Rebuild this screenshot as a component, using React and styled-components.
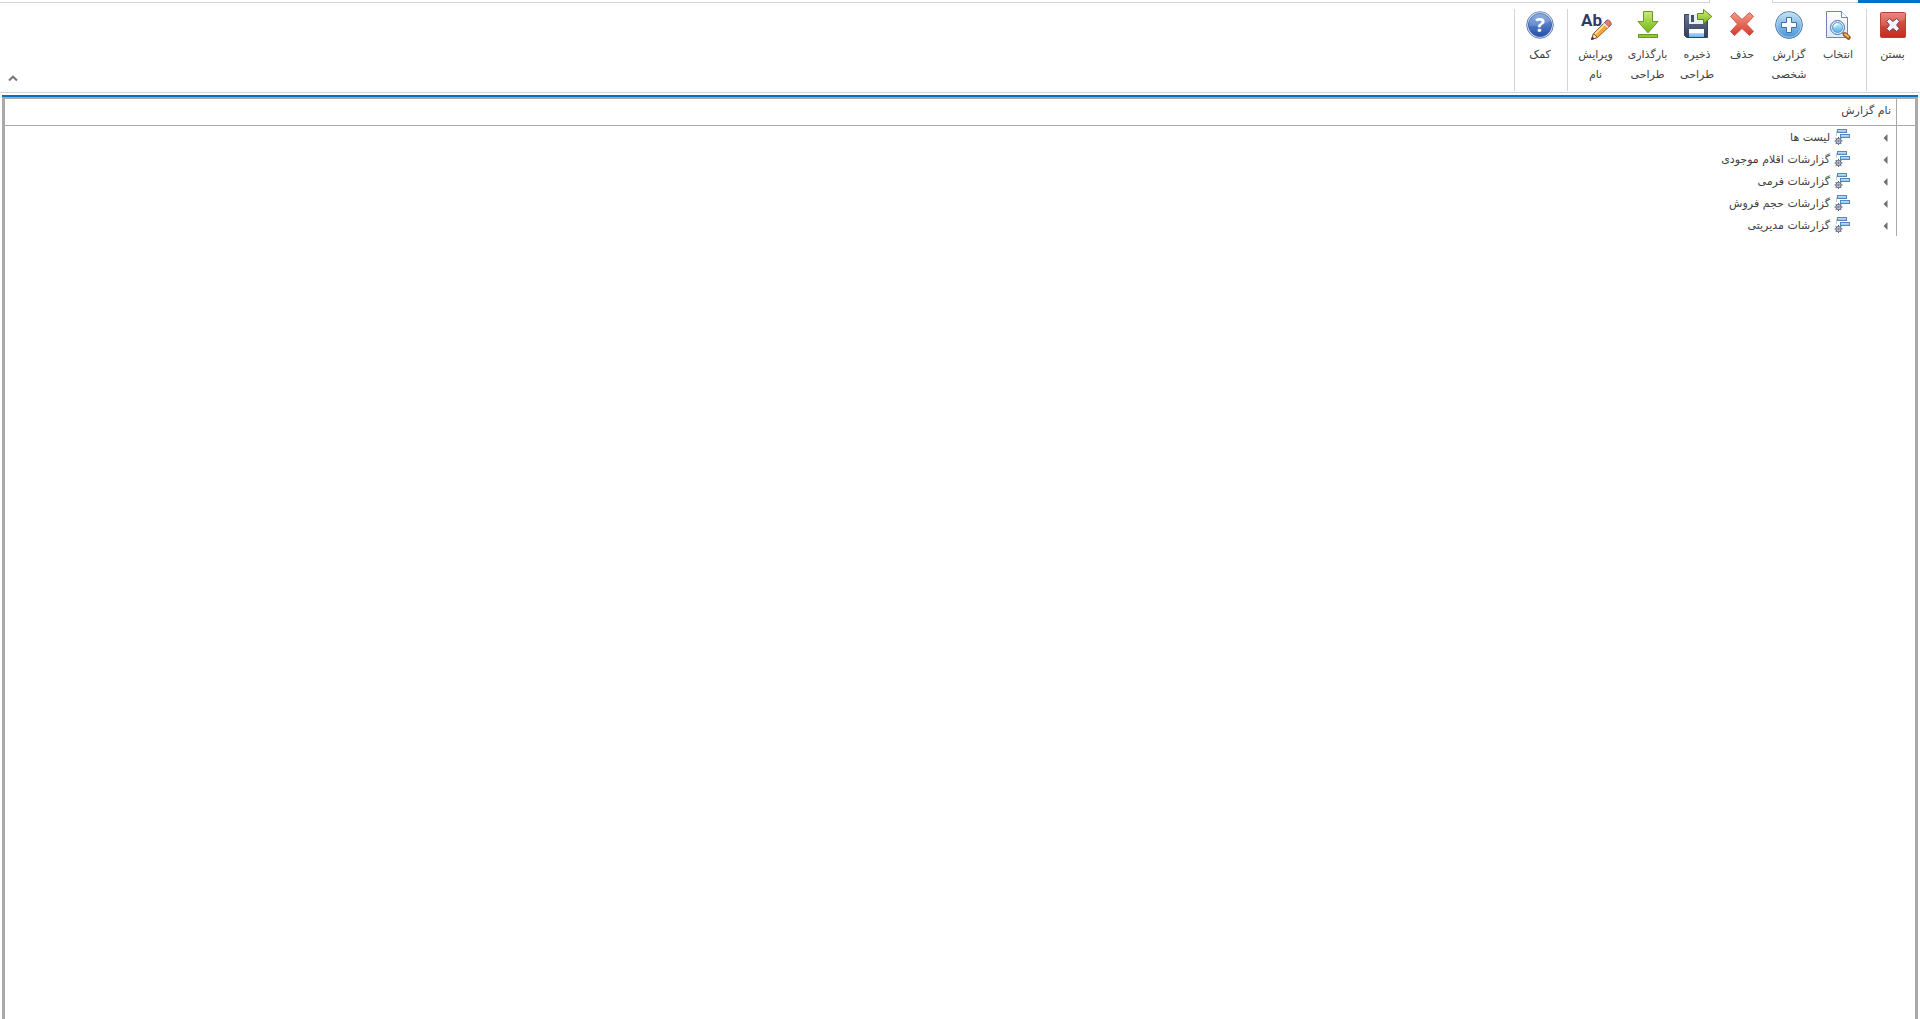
import React from "react";
import styled, { createGlobalStyle } from "styled-components";

const LINE = "#d4d4d4";
const BLUE = "#0072c6";
const GRID = "#a9a9a9";

const GlobalStyle = createGlobalStyle`
  body {
    margin: 0;
    background: #fff;
    color: #404040;
    font-family: "DejaVu Sans", "Noto Sans", sans-serif;
    font-size: 11px;
  }
  * { box-sizing: border-box; }
`;

const Page = styled.div`
  display: flex;
  flex-direction: column;
  min-height: 100vh;
`;

const TabStrip = styled.div`
  display: flex;
  height: 3px;
`;

const FileTab = styled.div`
  width: 62px;
  background: ${BLUE};
`;

const StripLine = styled.div`
  width: ${(p) => p.$width || "auto"};
  flex: ${(p) => (p.$width ? "none" : 1)};
  border-bottom: 1px solid ${LINE};
  border-inline-end: ${(p) => (p.$width ? `1px solid ${LINE}` : "none")};
  border-inline-start: ${(p) => (p.$width ? "none" : `1px solid ${LINE}`)};
`;

const ActiveTab = styled.div`
  width: 62px;
`;

const Ribbon = styled.header`
  display: flex;
  padding: 6px 0 1px;
  border-bottom: 1px solid ${LINE};
`;

const Group = styled.div`
  display: flex;
  height: 82px;
  padding-inline: 4px 2px;
  border-inline-end: 1px solid ${LINE};
`;

const RibbonButton = styled.button`
  display: flex;
  flex-direction: column;
  align-items: center;
  gap: 4px;
  width: ${(p) => p.$width}px;
  padding: 0;
  border: 0;
  background: none;
  color: inherit;
  font: inherit;
  line-height: 20px;
  white-space: pre-line;
  cursor: pointer;

  &:hover { background: #e6f2fa; }
`;

const Collapse = styled.button`
  align-self: flex-end;
  margin-inline-start: auto;
  padding: 9px 8px;
  border: 0;
  background: none;
  line-height: 0;
  cursor: pointer;
`;

const TreePanel = styled.main`
  display: flex;
  flex: 1;
  margin: 2px 2px 0;
  border-top: 2px solid ${BLUE};
`;

const TreeFrame = styled.div`
  flex: 1;
  border: 3px solid ${GRID};
  border-top-width: 2px;
  border-bottom: 0;
`;

const Tree = styled.table`
  width: 100%;
  border-spacing: 0;
`;

const HeadCell = styled.th`
  height: 27px;
  padding: 0 5px 4px;
  border-bottom: 1px solid ${GRID};
  font-weight: normal;
  text-align: start;
`;

const IndicatorHead = styled(HeadCell)`
  width: 19px;
  padding: 0;
  border-inline-end: 1px solid ${GRID};
`;

const Indicator = styled.td`
  padding: 0;
  border-inline-end: 1px solid ${GRID};
`;

const Cell = styled.td`
  height: 22px;
  padding: 0 6px;
`;

const Node = styled.div`
  display: flex;
  align-items: center;
  gap: 4px;
  height: 22px;
`;

const Expander = styled.button`
  width: 12px;
  height: 16px;
  margin-inline-end: 24px;
  padding: 2px 0 0 2px;
  border: 0;
  background: none;
  line-height: 0;
  cursor: pointer;
`;

const Icon = ({ children }) => (
  <svg width="32" height="32" viewBox="0 0 32 32" aria-hidden="true">{children}</svg>
);

const Gradient = ({ id, from, to }) => (
  <linearGradient id={id} x1="0" y1="0" x2="0" y2="1">
    <stop offset="0" stopColor={from} />
    <stop offset="1" stopColor={to} />
  </linearGradient>
);

const CloseIcon = () => (
  <Icon>
    <defs><Gradient id="close" from="#e88880" to="#c92f20" /></defs>
    <rect x="3.5" y="3.5" width="25" height="25" rx="1" fill="url(#close)" stroke="#b84339" />
    <path d="M4 17Q17 17 28 10V28H4Z" fill="#b92015" opacity=".3" />
    <path d="M9.5 12.3 12.3 9.5 16 12.4 19.7 9.5 22.5 12.3 19.6 16 22.5 19.7 19.7 22.5 16 19.6 12.3 22.5 9.5 19.7 12.4 16Z" fill="#f2f4fa" stroke="#7c3b4c" strokeLinejoin="round" />
  </Icon>
);

const SelectIcon = () => (
  <Icon>
    <defs><Gradient id="page" from="#ffffff" to="#dfe8f6" /><Gradient id="lens" from="#d5f5ff" to="#4cb0e8" /></defs>
    <path d="M4.5 2.5H19.5L25.5 8.5V28.5H4.5Z" fill="url(#page)" stroke="#6e83b7" />
    <path d="M19.5 2.5V8.5H25.5" fill="#fff" stroke="#6e83b7" />
    <path d="M20.5 23.5 22.5 25.5" stroke="#7888a5" strokeWidth="2" />
    <path d="m23 25.5 3.5 3" stroke="#995a22" strokeWidth="4.5" strokeLinecap="round" />
    <path d="m23.1 25.2 3 2.6" stroke="#f5b85f" strokeWidth="2" strokeLinecap="round" />
    <circle cx="15.5" cy="18.5" r="7" fill="#e5edf7" stroke="#4f6ea8" />
    <circle cx="15.5" cy="18.5" r="5" fill="url(#lens)" stroke="#5a9ad0" />
    <path d="M12.3 18Q13 14.8 16 14.8" fill="none" stroke="#fff" strokeWidth="1.3" />
  </Icon>
);

const AddIcon = () => (
  <Icon>
    <defs><Gradient id="add" from="#c7e3f6" to="#4693d4" /></defs>
    <circle cx="16" cy="16" r="13.4" fill="url(#add)" stroke="#4f78ae" />
    <circle cx="16" cy="16" r="12.4" fill="none" stroke="#b9ddf4" opacity=".7" />
    <path d="M13.5 8.5H18.5V13.5H23.5V18.5H18.5V23.5H13.5V18.5H8.5V13.5H13.5Z" fill="#f8fbff" stroke="#426da8" strokeLinejoin="round" />
  </Icon>
);

const DeleteIcon = () => (
  <Icon>
    <defs><Gradient id="del" from="#f29a88" to="#d73a2b" /></defs>
    <path d="M4.5 7.5 8.5 3.5 16 10.5 23.5 3.5 27.5 7.5 20.5 15 27.5 22.5 23.5 26.5 16 19.5 8.5 26.5 4.5 22.5 11.5 15Z" fill="url(#del)" stroke="#d0584c" strokeLinejoin="round" />
  </Icon>
);

const SaveIcon = () => (
  <Icon>
    <defs><Gradient id="disk" from="#67758e" to="#343d59" /><Gradient id="go" from="#d7ed79" to="#73b51e" /><Gradient id="tag" from="#ffffff" to="#5eb8ed" /></defs>
    <path d="M3.5 5.5H26.5V28.5H5.5L3.5 26.5Z" fill="url(#disk)" stroke="#38425f" />
    <rect x="8" y="5" width="15" height="10" fill="#e9edf4" />
    <rect x="10" y="6" width="3" height="7" fill="#46516d" />
    <rect x="8" y="20" width="15" height="8" fill="url(#tag)" />
    <path d="M8 20H23V24H8Z" fill="#fff" />
    <path d="M16.5 4.5H22.5V.5L30.8 7.5 22.5 14.8V10.5H16.5Z" fill="url(#go)" stroke="#5d8b20" strokeLinejoin="round" />
  </Icon>
);

const LoadIcon = () => (
  <Icon>
    <defs><Gradient id="load" from="#cce876" to="#70b713" /></defs>
    <path d="M11.5 2.5H20.5V12.5H26L16 23.8 6 12.5H11.5Z" fill="url(#load)" stroke="#679b24" strokeLinejoin="round" />
    <rect x="6.5" y="25.5" width="19" height="3" fill="#8fc832" stroke="#679b24" />
  </Icon>
);

const AbText = styled.text`
  direction: ltr;
  font: bold 17px Roboto, sans-serif;
  fill: #2d3c66;
`;

const RenameIcon = () => (
  <Icon>
    <AbText x="1" y="17">Ab</AbText>
    <path d="M11.5 30.5 13.5 24.5 26.5 11.5 31 15.8 17.5 28.5Z" fill="#f6a938" stroke="#935b35" strokeLinejoin="round" />
    <path d="m15 25 11.5-11.5" stroke="#ffe6a1" strokeWidth="1.7" />
    <path d="M24.3 13.7 27 11Q30.5 11 31.3 15.2L28.8 17.8Z" fill="#df7b77" stroke="#a64c54" />
    <path d="m23.6 14.4 4.5 4" stroke="#e5e5ec" strokeWidth="1.5" />
    <path d="M11.5 30.5 13.5 24.5 17.5 28.5Z" fill="#f8dfbf" stroke="#935b35" />
    <path d="M11 31 12.2 27.6 14.4 29.8Z" fill="#303653" />
  </Icon>
);

const HelpMark = styled.text`
  font: bold 20px "Open Sans", sans-serif;
  fill: #fff;
  text-anchor: middle;
`;

const HelpIcon = () => (
  <Icon>
    <defs><Gradient id="help" from="#7ba3df" to="#244fa9" /></defs>
    <circle cx="16" cy="16" r="13.3" fill="#dce6f5" stroke="#6480b5" />
    <circle cx="16" cy="16" r="11.5" fill="url(#help)" stroke="#3c62ae" />
    <path d="M5 17Q16 18 27 12A11 11 0 0 0 5 15Z" fill="#fff" opacity=".15" />
    <HelpMark x="16" y="23">?</HelpMark>
  </Icon>
);

const teeth = [0, 45, 90, 135, 180, 225, 270, 315];

const ReportIcon = () => (
  <svg width="16" height="16" viewBox="0 0 16 16" aria-hidden="true">
    <defs><Gradient id="box" from="#cceafb" to="#80bce8" /></defs>
    <path d="M2.5 7V2.5H4" fill="none" stroke="#c3cad8" />
    <rect x="3.5" y=".5" width="9" height="3" fill="url(#box)" stroke="#5587bd" />
    <rect x="6.5" y="5.5" width="9" height="3" fill="url(#box)" stroke="#5587bd" />
    <g stroke="#59617c" fill="none">
      {teeth.map((a) => <path key={a} d="M4.5 8V9.5" transform={`rotate(${a} 4.5 12)`} />)}
      <circle cx="4.5" cy="12" r="2.6" fill="#d7dbe7" />
      <circle cx="4.5" cy="12" r=".8" fill="#fff" />
    </g>
  </svg>
);

const groups = [
  [{ label: "بستن", width: 47, icon: CloseIcon }],
  [
    { label: "انتخاب", width: 48, icon: SelectIcon },
    { label: "گزارش\nشخصی", width: 50, icon: AddIcon },
    { label: "حذف", width: 44, icon: DeleteIcon },
    { label: "ذخیره\nطراحی", width: 46, icon: SaveIcon },
    { label: "بارگذاری\nطراحی", width: 53, icon: LoadIcon },
    { label: "ویرایش\nنام", width: 51, icon: RenameIcon },
  ],
  [{ label: "کمک", width: 46, icon: HelpIcon }],
];

const reports = [
  "لیست ها",
  "گزارشات اقلام موجودی",
  "گزارشات فرمی",
  "گزارشات حجم فروش",
  "گزارشات مدیریتی",
];

export default function App() {
  return (
    <Page dir="rtl" lang="fa">
      <GlobalStyle />
      <TabStrip>
        <FileTab />
        <StripLine $width="86px" />
        <ActiveTab />
        <StripLine />
      </TabStrip>
      <Ribbon>
        {groups.map((buttons, i) => (
          <Group key={i}>
            {buttons.map(({ label, width, icon: Glyph }) => (
              <RibbonButton key={label} type="button" $width={width}>
                <Glyph />
                {label}
              </RibbonButton>
            ))}
          </Group>
        ))}
        <Collapse type="button" aria-label="جمع کردن نوار">
          <svg width="10" height="7" viewBox="0 0 10 7" aria-hidden="true">
            <path d="M1 5.5 5 1.7 9 5.5" fill="none" stroke="#777" strokeWidth="2" />
          </svg>
        </Collapse>
      </Ribbon>
      <TreePanel>
        <TreeFrame>
          <Tree>
            <thead>
              <tr>
                <IndicatorHead />
                <HeadCell scope="col">نام گزارش</HeadCell>
              </tr>
            </thead>
            <tbody>
              {reports.map((name) => (
                <tr key={name}>
                  <Indicator />
                  <Cell>
                    <Node>
                      <Expander type="button" aria-label={name}>
                        <svg width="5" height="8" viewBox="0 0 5 8" aria-hidden="true">
                          <path d="M4.5 0V8L.5 4Z" fill="#707070" />
                        </svg>
                      </Expander>
                      <ReportIcon />
                      {name}
                    </Node>
                  </Cell>
                </tr>
              ))}
            </tbody>
          </Tree>
        </TreeFrame>
      </TreePanel>
    </Page>
  );
}
